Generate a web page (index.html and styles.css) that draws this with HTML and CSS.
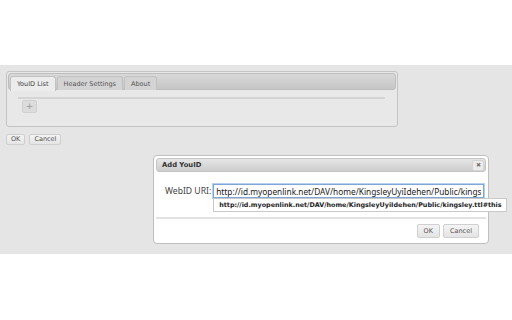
FILE: index.html
```html
<!DOCTYPE html>
<html lang="en">
<head>
<meta charset="UTF-8">
<meta name="viewport" content="width=device-width, initial-scale=1.0">
<title>YouID</title>
<link rel="stylesheet" href="styles.css">
</head>
<body>
<div class="stage">
    <div class="tabs">
        <ul class="tab-nav">
            <li class="tab active">YouID List</li>
            <li class="tab">Header Settings</li>
            <li class="tab">About</li>
        </ul>
        <div class="tab-body">
            <div class="rule"></div>
            <button class="btn add-btn">+</button>
        </div>
    </div>
    <div class="actions">
        <button class="btn">OK</button>
        <button class="btn">Cancel</button>
    </div>

    <!-- Add YouID dialog -->
    <div class="dialog">
        <div class="dialog-title">
            <span>Add YouID</span>
            <button class="close-btn">&#x2716;</button>
        </div>
        <div class="dialog-content">
            <label class="field-label">WebID URI:</label>
            <div class="field">
                <input class="uri-input" type="text" value="http://id.myopenlink.net/DAV/home/KingsleyUyiIdehen/Public/kingsley.ttl#this">
                <div class="suggest">http://id.myopenlink.net/DAV/home/KingsleyUyiIdehen/Public/kingsley.ttl#this</div>
            </div>
        </div>
        <div class="dialog-buttons">
            <button class="btn">OK</button>
            <button class="btn">Cancel</button>
        </div>
    </div>
</div>
</body>
</html>
```
FILE: styles.css
```css
body {
    margin: 0;
    background-color: #fff;
    font-family: "DejaVu Sans", Verdana, sans-serif;
    color: #333;
}
.stage {
    margin-top: 65px;
    height: 189px;
    background-color: #e5e5e5;
    padding: 6px 6px 0 6px;
    box-sizing: border-box;
}
.tabs {
    width: 392px;
    height: 56px;
    box-sizing: border-box;
    border: 1px solid #c4c4c4;
    border-radius: 3px;
    background-color: #e8e8e8;
    padding: 1px;
}
.tab-nav {
    list-style: none;
    margin: 0;
    padding: 2px 0 0 1px;
    height: 17px;
    box-sizing: border-box;
    display: flex;
    gap: 1px;
    background: linear-gradient(#d9d9d9, #c6c6c6);
    border: 1px solid #bdbdbd;
    border-radius: 3px;
}
.tab {
    font-size: 6.5px;
    color: #555;
    padding: 3px 6px 0 6px;
    height: 14px;
    box-sizing: border-box;
    background: #d4d4d4;
    border: 1px solid #c2c2c2;
    border-bottom: none;
    border-radius: 3px 3px 0 0;
}
.tab.active {
    background: #ececec;
    color: #444;
    height: 15px;
}
.tab-body {
    padding: 7px 9px 0 10px;
}
.rule {
    height: 2px;
    background: #d4d4d4;
    margin-right: 2px;
}
.btn {
    font-family: "DejaVu Sans", Verdana, sans-serif;
    font-size: 6.5px;
    color: #555;
    background: linear-gradient(#f4f4f4, #e4e4e4);
    border: 1px solid #cfcfcf;
    border-radius: 2px;
    height: 11px;
    padding: 0 4px;
    line-height: 9px;
}
.add-btn {
    display: block;
    margin: 1px 0 0 4px;
    width: 15px;
    height: 13px;
    padding: 0;
    font-size: 9px;
    color: #999;
    background: #dcdcdc;
    border-color: #d0d0d0;
}
.actions {
    display: flex;
    gap: 4px;
    margin-top: 7px;
}
.dialog {
    margin: 10px 0 0 147px;
    width: 336px;
    height: 89px;
    box-sizing: border-box;
    background: #fff;
    border: 1px solid #bfbfbf;
    border-radius: 4px;
    padding: 2px;
}
.dialog-title {
    height: 14px;
    box-sizing: border-box;
    background: linear-gradient(#e6e6e6, #cdcdcd);
    border: 1px solid #c4c4c4;
    border-radius: 3px;
    display: flex;
    align-items: center;
    justify-content: space-between;
    padding: 0 1px 0 5px;
    font-size: 6.8px;
    font-weight: bold;
    color: #333;
}
.close-btn {
    width: 12px;
    height: 11px;
    padding: 0;
    font-size: 6px;
    color: #777;
    background: #ececec;
    border: 1px solid #d4d4d4;
    border-radius: 2px;
    line-height: 9px;
}
.dialog-content {
    display: flex;
    align-items: center;
    padding: 12px 0 0 9px;
    height: 26px;
    box-sizing: border-box;
}
.field-label {
    font-family: "Noto Sans", sans-serif;
    font-size: 8.6px;
    color: #444;
    margin-right: 2px;
    white-space: nowrap;
    flex-shrink: 0;
}
.field {
    position: relative;
}
.uri-input {
    display: block;
    width: 271px;
    height: 14px;
    box-sizing: border-box;
    border: 1px solid #7ea7d8;
    box-shadow: 0 0 0 1px #b8d0ee;
    padding: 0 2px;
    font-family: "Noto Sans", sans-serif;
    font-size: 8.3px;
    color: #222;
    outline: none;
}
.suggest {
    position: absolute;
    left: 0;
    top: 14px;
    width: 294px;
    height: 14px;
    box-sizing: border-box;
    background: #fff;
    border: 1px solid #c9c9c9;
    padding: 2px 0 0 5px;
    font-size: 6.4px;
    font-weight: bold;
    color: #222;
    white-space: nowrap;
    z-index: 2;
}
.dialog-buttons {
    border-top: 2px solid #e2e2e2;
    margin-top: 19px;
    display: flex;
    justify-content: flex-end;
    gap: 3px;
    padding: 5px 7px 0 0;
}
.dialog-buttons .btn {
    height: 14px;
    padding: 0 6px;
    font-size: 6.5px;
    line-height: 12px;
}
```
